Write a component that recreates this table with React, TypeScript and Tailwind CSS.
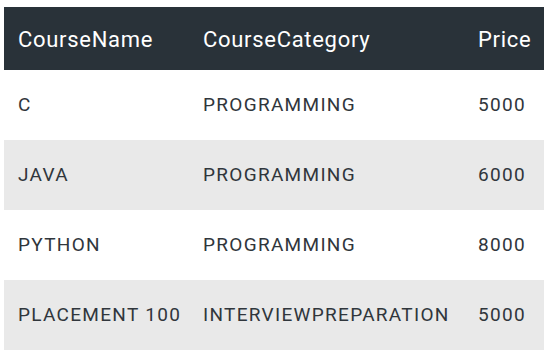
const rows = [
  { name: "C", category: "PROGRAMMING", price: "5000" },
  { name: "JAVA", category: "PROGRAMMING", price: "6000" },
  { name: "PYTHON", category: "PROGRAMMING", price: "8000" },
  { name: "PLACEMENT 100", category: "INTERVIEWPREPARATION", price: "5000" },
];

const App = () => {
  return (
    <div className="min-h-screen bg-white pl-[4px] pt-[7px] font-['Roboto',sans-serif]">
      <table className="w-[540px] table-fixed border-collapse text-left">
        <colgroup>
          <col className="w-[185px]" />
          <col className="w-[275px]" />
          <col className="w-[80px]" />
        </colgroup>
        <thead>
          <tr className="h-[63px] bg-[#293239] text-white">
            <th className="px-[14px] pt-[1px] text-[22px] font-normal tracking-[0.7px]">CourseName</th>
            <th className="px-[14px] pt-[1px] text-[22px] font-normal tracking-[0.7px]">CourseCategory</th>
            <th className="px-[14px] pt-[1px] text-[22px] font-normal tracking-[0.7px]">Price</th>
          </tr>
        </thead>
        <tbody>
          {rows.map((r, i) => (
            <tr key={i} className={`h-[70px] text-[#30363c] ${i % 2 === 1 ? "bg-[#e9e9e9]" : "bg-white"}`}>
              <td className="px-[14px] text-[19px] tracking-[1.3px] whitespace-nowrap">{r.name}</td>
              <td className="px-[14px] text-[19px] tracking-[1.3px] whitespace-nowrap">{r.category}</td>
              <td className="px-[14px] text-[19px] tracking-[1.3px]">{r.price}</td>
            </tr>
          ))}
        </tbody>
      </table>
    </div>
  );
};

export default App;
